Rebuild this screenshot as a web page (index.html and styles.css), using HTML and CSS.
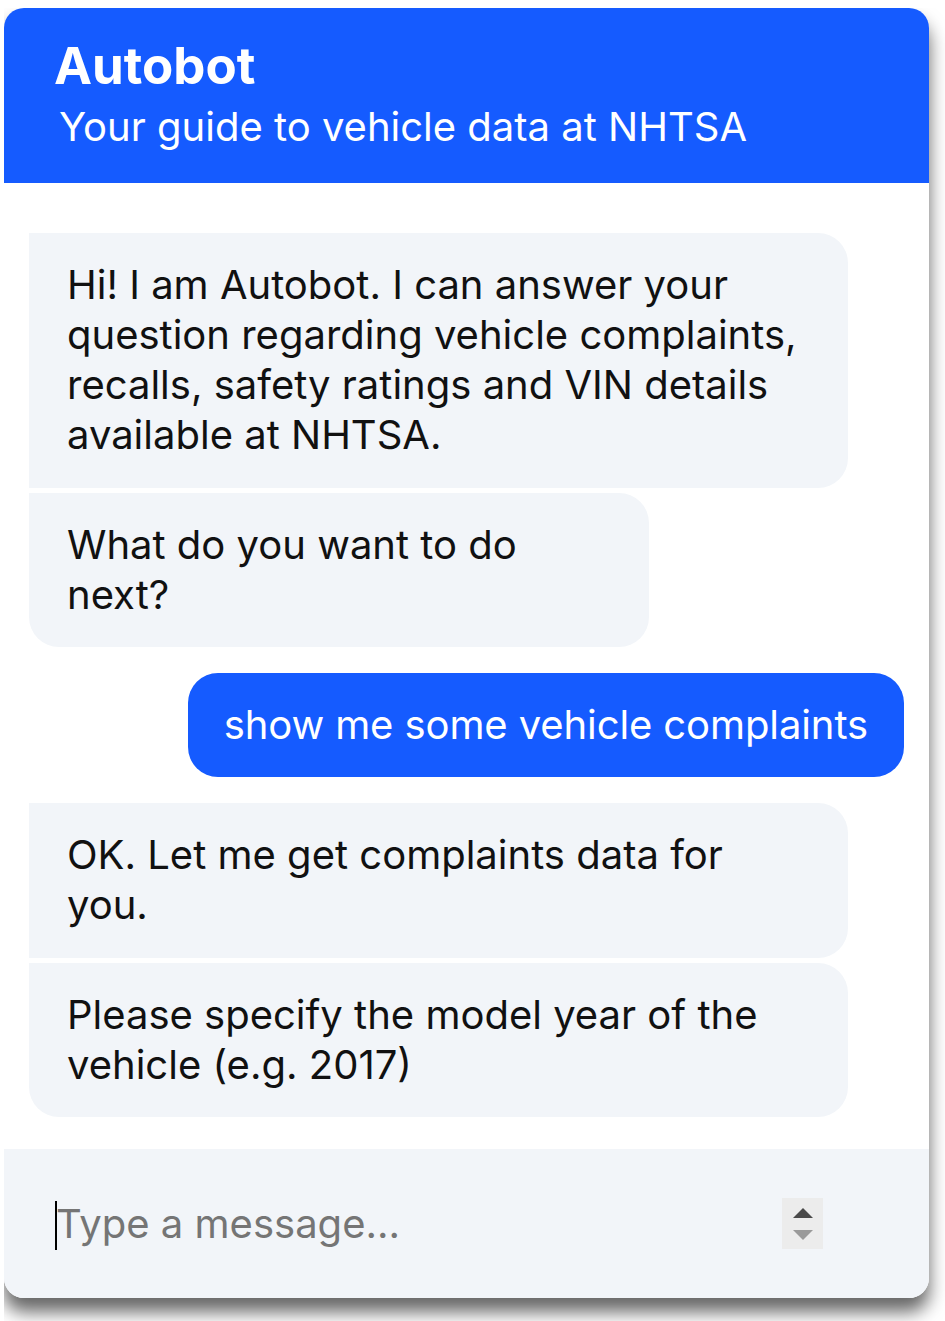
FILE: index.html
```html
<!DOCTYPE html>
<html lang="en">
<head>
<meta charset="utf-8">
<title>Autobot</title>
<link rel="stylesheet" href="styles.css">
</head>
<body>
<div class="widget">
  <header class="head">
    <h1 class="title">Autobot</h1>
    <p class="subtitle">Your guide to vehicle data at NHTSA</p>
  </header>
  <main class="chat">
    <div class="msg bot first">Hi! I am Autobot. I can answer your<br>question regarding vehicle complaints,<br>recalls, safety ratings and VIN details<br>available at NHTSA.</div>
    <div class="msg bot last narrow">What do you want to do<br>next?</div>
    <div class="msg user">show me some vehicle complaints</div>
    <div class="msg bot first">OK. Let me get complaints data for<br>you.</div>
    <div class="msg bot last">Please specify the model year of the<br>vehicle (e.g. 2017)</div>
  </main>
  <footer class="composer">
    <span class="caret"></span>
    <input class="field" type="text" placeholder="Type a message...">
    <div class="spinner">
      <span class="tri up"></span>
      <span class="tri down"></span>
    </div>
  </footer>
</div>
</body>
</html>
```
FILE: styles.css
```css
* { box-sizing: border-box; }
html, body { background: #ffffff; }
body {
  margin: 8px 0 0 4px;
  padding-bottom: 23px;
  font-family: "Inter", "Noto Sans", sans-serif;
  color: #111111;
}
.widget {
  width: 925px;
  border-radius: 20px;
  overflow: hidden;
  background: #ffffff;
  box-shadow: 0 14px 18px rgba(0, 0, 0, 0.6);
}
.head {
  background: #155bff;
  color: #ffffff;
  padding: 29px 0 28px 50px;
}
.title {
  margin: 0;
  font-size: 51px;
  line-height: 57px;
  font-weight: 700;
}
.subtitle {
  margin: 5px 0 0 5px;
  font-size: 40px;
  line-height: 56px;
  font-weight: 400;
}
.chat {
  display: flex;
  flex-direction: column;
  align-items: flex-start;
  padding: 50px 25px 32px;
}
.msg {
  font-size: 40px;
  line-height: 50px;
  padding: 27px 38px;
}
.bot {
  width: 819px;
  background: #f2f5f9;
  border-radius: 0 30px 30px 0;
  margin-bottom: 5px;
}
.bot.first { padding-bottom: 28px; }
.bot.narrow { width: 620px; }
.bot.last { border-radius: 0 30px 30px 30px; }
.user {
  align-self: flex-end;
  background: #155bff;
  color: #ffffff;
  border-radius: 30px;
  margin: 21px 0 26px;
  padding-left: 36px;
  padding-right: 36px;
  letter-spacing: -0.1px;
}
.chat .msg:last-child { margin-bottom: 0; }
.composer {
  display: flex;
  align-items: center;
  height: 149px;
  background: #f2f5f9;
  padding: 0 106px 0 51px;
}
.caret {
  width: 2px;
  height: 49px;
  background: #000000;
  margin-top: 4px;
  flex: none;
}
.field {
  flex: 1;
  min-width: 0;
  border: none;
  outline: none;
  background: transparent;
  font-family: "Inter", "Noto Sans", sans-serif;
  font-size: 40px;
  color: #111111;
  padding: 0;
  margin-left: -1px;
}
.field::placeholder { color: #757575; }
.spinner {
  width: 41px;
  height: 51px;
  background: #ececec;
  display: flex;
  flex-direction: column;
  align-items: center;
  justify-content: center;
  gap: 12px;
  flex: none;
}
.tri {
  width: 0;
  height: 0;
  border-left: 10px solid transparent;
  border-right: 10px solid transparent;
}
.tri.up { border-bottom: 10px solid #4a4a4a; }
.tri.down { border-top: 10px solid #9a9a9a; }
```
